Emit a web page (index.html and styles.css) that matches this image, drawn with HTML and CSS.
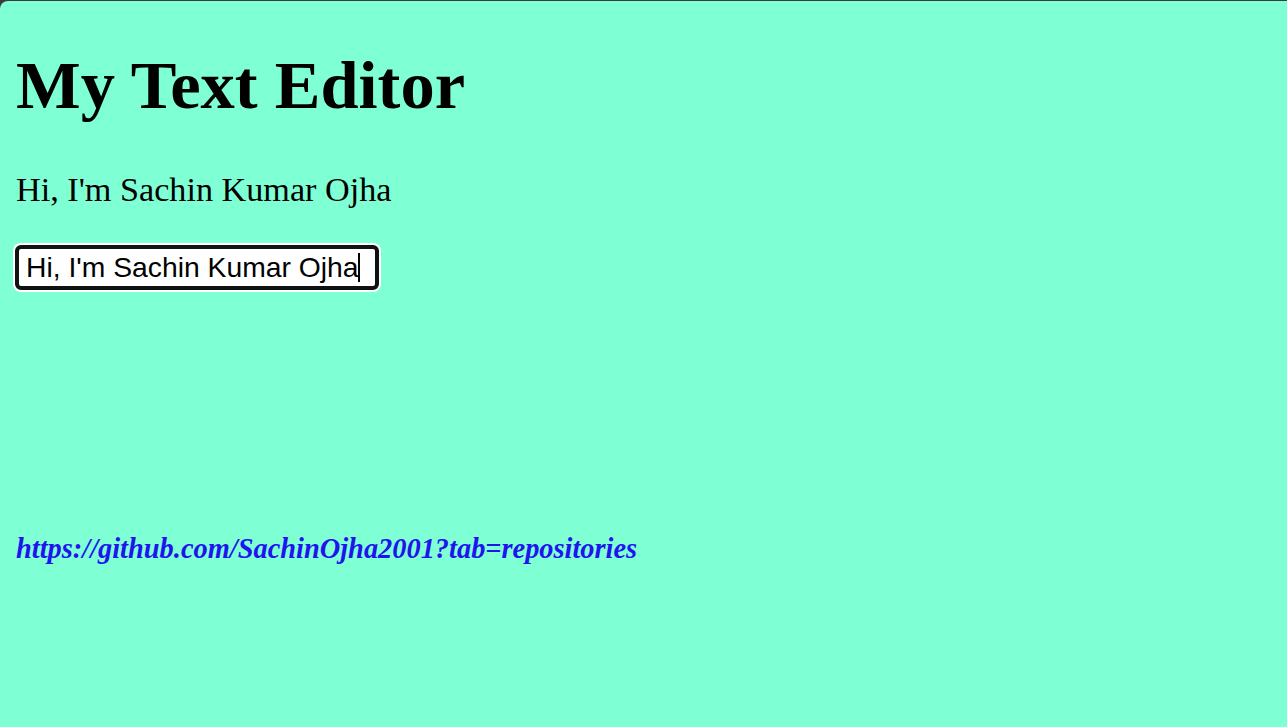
FILE: index.html
```html
<!DOCTYPE html>
<html lang="en">
<head>
<meta charset="utf-8">
<title>My Text Editor</title>
<link rel="stylesheet" href="styles.css">
</head>
<body>
<div class="page">
  <h1 class="title">My Text Editor</h1>
  <p class="greeting">Hi, I'm Sachin Kumar Ojha</p>
  <div class="field">
    <input class="editor" type="text" value="Hi, I'm Sachin Kumar Ojha">
    <span class="caret"></span>
  </div>
  <h5 class="link"><a href="#">https://github.com/SachinOjha2001?tab=repositories</a></h5>
</div>
</body>
</html>
```
FILE: styles.css
```css
html {
  background: #3b3b3b;
  margin: 0;
  padding: 0;
  height: 100%;
}
body {
  margin: 1px 0 0 0;
  min-height: calc(100% - 1px);
  background: #7fffd4;
  border-top-left-radius: 8px;
  font-family: "Liberation Serif", "Times New Roman", serif;
}
.page {
  padding: 1px 16px 0 16px;
}
.title {
  font-size: 68.5px;
  font-weight: bold;
  margin: 44px 0 46px 0;
  line-height: normal;
}
.greeting {
  font-size: 34.2px;
  margin: 0 0 36px 0;
}
.field {
  position: relative;
  width: 364px;
  margin-left: -1px;
}
.editor {
  font-family: "Liberation Sans", Arial, sans-serif;
  font-size: 28.3px;
  width: 364px;
  height: 45px;
  box-sizing: border-box;
  padding: 0 6px 0 7px;
  border: 4px solid #111111;
  border-radius: 6px;
  outline: none;
  box-shadow: 0 0 0 2px #ffffff;
  background: #ffffff;
  color: #000;
  margin: 0;
  display: block;
}
.caret {
  position: absolute;
  left: 343px;
  top: 8px;
  width: 1.5px;
  height: 29px;
  background: #000;
}
.link {
  font-size: 28.4px;
  font-style: italic;
  font-weight: bold;
  margin: 243px 0 0 0;
}
.link a {
  color: #1f14ee;
  text-decoration: none;
}
```
